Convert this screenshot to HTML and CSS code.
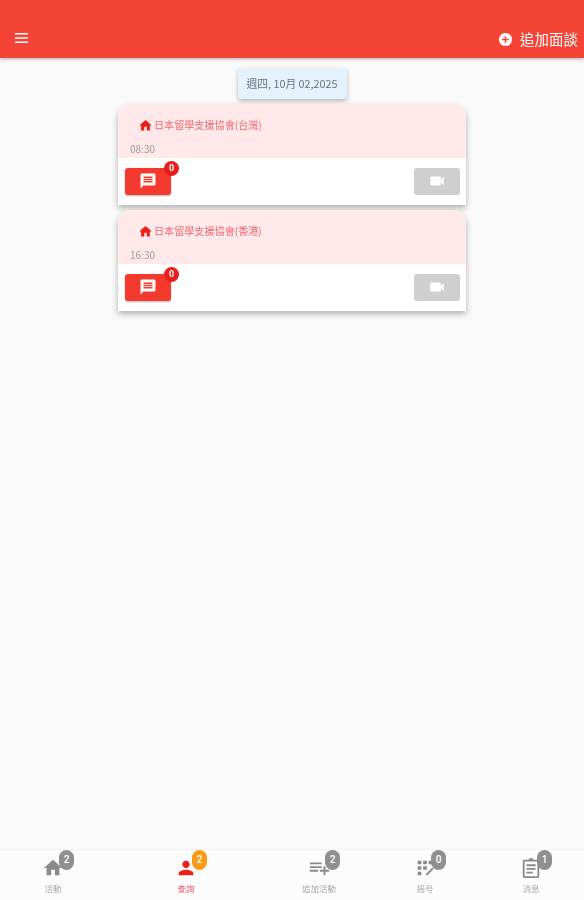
FILE: index.html
```html
<!DOCTYPE html>
<html lang="zh-Hant">
<head>
<meta charset="utf-8">
<title>面談</title>
<link rel="stylesheet" href="styles.css">
</head>
<body>
<div class="app">
  <header class="topbar">
    <svg class="menu-icon" viewBox="0 0 16 12"><path d="M1 1.500h14M1 6h14M1 10.500h14" stroke="#fff" stroke-width="1.500" fill="none"/></svg>
    <div class="add-action">
      <svg class="add-icon" viewBox="0 0 16 16"><circle cx="8" cy="8" r="7" fill="#fff"/><path d="M8 4.500v7M4.500 8h7" stroke="#f54336" stroke-width="1.600"/></svg>
      <span>追加面談</span>
    </div>
  </header>

  <main class="content">
    <div class="date-chip">週四, 10月 02,2025</div>

    <article class="card">
      <div class="card-head">
        <div class="place">
          <svg class="home-icon" viewBox="0 0 24 24"><path d="M10 20v-6h4v6h5v-8h3L12 3 2 12h3v8z"/></svg>
          <span>日本留學支援協會(台灣)</span>
        </div>
        <div class="time">08:30</div>
      </div>
      <div class="card-actions">
        <button class="chat-btn">
          <svg class="btn-icon" viewBox="0 0 24 24"><path d="M20 2H4c-1.100 0-2 .9-2 2v18l4-4h14c1.100 0 2-.9 2-2V4c0-1.100-.9-2-2-2zm-2 12H6v-2h12zm0-3H6V9h12zm0-3H6V6h12z"/></svg>
          <span class="chat-badge">0</span>
        </button>
        <button class="video-btn">
          <svg class="btn-icon" viewBox="0 0 24 24"><path d="M17 10.500V7c0-.55-.45-1-1-1H4c-.55 0-1 .45-1 1v10c0 .55.45 1 1 1h12c.55 0 1-.45 1-1v-3.500l4 4v-11z"/></svg>
        </button>
      </div>
    </article>

    <article class="card">
      <div class="card-head">
        <div class="place">
          <svg class="home-icon" viewBox="0 0 24 24"><path d="M10 20v-6h4v6h5v-8h3L12 3 2 12h3v8z"/></svg>
          <span>日本留學支援協會(香港)</span>
        </div>
        <div class="time">16:30</div>
      </div>
      <div class="card-actions">
        <button class="chat-btn">
          <svg class="btn-icon" viewBox="0 0 24 24"><path d="M20 2H4c-1.100 0-2 .9-2 2v18l4-4h14c1.100 0 2-.9 2-2V4c0-1.100-.9-2-2-2zm-2 12H6v-2h12zm0-3H6V9h12zm0-3H6V6h12z"/></svg>
          <span class="chat-badge">0</span>
        </button>
        <button class="video-btn">
          <svg class="btn-icon" viewBox="0 0 24 24"><path d="M17 10.500V7c0-.55-.45-1-1-1H4c-.55 0-1 .45-1 1v10c0 .55.45 1 1 1h12c.55 0 1-.45 1-1v-3.500l4 4v-11z"/></svg>
        </button>
      </div>
    </article>
  </main>

  <nav class="tabbar">
    <div class="tab">
      <div class="tab-icon">
        <svg viewBox="0 0 24 24"><path d="M10 20v-6h4v6h5v-8h3L12 3 2 12h3v8z"/></svg>
        <span class="tab-badge">2</span>
      </div>
      <span class="tab-label">活動</span>
    </div>
    <div class="tab tab-active">
      <div class="tab-icon">
        <svg viewBox="0 0 24 24"><path d="M12 12c2.200 0 4-1.800 4-4s-1.800-4-4-4-4 1.800-4 4 1.800 4 4 4zm0 2c-2.700 0-8 1.300-8 4v2h16v-2c0-2.700-5.300-4-8-4z"/></svg>
        <span class="tab-badge">2</span>
      </div>
      <span class="tab-label">查詢</span>
    </div>
    <div class="tab">
      <div class="tab-icon">
        <svg viewBox="0 0 24 24"><path d="M2 6h13v2H2zm0 4h13v2H2zm0 4h9v2H2zm15 0v-4h2v4h4v2h-4v4h-2v-4h-4v-2z"/></svg>
        <span class="tab-badge">2</span>
      </div>
      <span class="tab-label">追加活動</span>
    </div>
    <div class="tab">
      <div class="tab-icon">
        <svg viewBox="0 0 24 24"><path d="M4 4h4v4H4zm6 0h4v4h-4zm6 0h4v4h-4zM4 10h4v4H4zm6 0h4v4h-4zM4 16h4v4H4zm9 4v-1.500l7-7 1.500 1.500-7 7z"/></svg>
        <span class="tab-badge">0</span>
      </div>
      <span class="tab-label">摇号</span>
    </div>
    <div class="tab">
      <div class="tab-icon">
        <svg viewBox="0 0 24 24"><path d="M19 3h-4.200C14.400 1.800 13.300 1 12 1s-2.400.8-2.800 2H5c-1.100 0-2 .9-2 2v16c0 1.100.9 2 2 2h14c1.100 0 2-.9 2-2V5c0-1.100-.9-2-2-2zM19 21H5V5h14zM7 8h10v2H7zm0 4h10v2H7zm0 4h7v2H7z"/></svg>
        <span class="tab-badge">1</span>
      </div>
      <span class="tab-label">消息</span>
    </div>
  </nav>
</div>
</body>
</html>
```

FILE: styles.css
```css
* { box-sizing: border-box; }
html, body { margin: 0; height: 100%; }
body {
  font-family: "Noto Sans CJK TC", "Roboto", sans-serif;
  background: #fafafa;
  overflow: hidden;
}
.app {
  height: 900px;
  display: flex;
  flex-direction: column;
  filter: blur(.45px);
}
.topbar {
  height: 58px;
  flex: none;
  background: #f54336;
  box-shadow: 0 1px 3px rgba(0,0,0,.3);
  display: flex;
  align-items: flex-end;
  justify-content: space-between;
  padding: 0 6px 8px 14px;
  color: #fff;
  position: relative;
}
.menu-icon { width: 15px; height: 12px; margin-bottom: 6px; }
.add-action {
  display: flex;
  align-items: center;
  gap: 7px;
  font-size: 14.500px;
  line-height: 22px;
  color: #fff;
}
.add-icon { width: 15px; height: 15px; }
.content {
  flex: 1;
  display: flex;
  flex-direction: column;
  align-items: center;
  padding-top: 10px;
}
.date-chip {
  width: 109px;
  height: 31px;
  background: #e3f2fd;
  border-radius: 3px;
  box-shadow: 0 2px 4px rgba(0,0,0,.28);
  color: #6b7378;
  font-size: 10.800px;
  line-height: 31px;
  text-align: center;
  white-space: nowrap;
  margin-bottom: 5px;
}
.card {
  width: 348px;
  height: 101px;
  margin-bottom: 5px;
  background: #fff;
  border-radius: 12px 12px 0 0;
  box-shadow: 0 3px 6px rgba(0,0,0,.3);
  display: flex;
  flex-direction: column;
}
.card-head {
  height: 53.500px;
  flex: none;
  background: #ffe9ea;
  border-radius: 12px 12px 0 0;
  padding: 13px 12px 0;
}
.place {
  display: flex;
  align-items: center;
  gap: 1px;
  padding-left: 8px;
  height: 16px;
  color: #ef6a72;
  font-size: 10.100px;
  line-height: 16px;
  white-space: nowrap;
}
.home-icon { width: 15px; height: 15px; fill: #ea1f1a; flex: none; }
.time {
  margin-top: 9px;
  color: #9a9a9a;
  font-size: 10px;
  line-height: 14px;
}
.card-actions {
  flex: 1;
  display: flex;
  align-items: center;
  justify-content: space-between;
  padding: 0 6px 0 7px;
}
.chat-btn, .video-btn {
  width: 46px;
  height: 27px;
  border: 0;
  border-radius: 3px;
  padding: 0;
  display: flex;
  align-items: center;
  justify-content: center;
  position: relative;
}
.chat-btn { background: #f43a2e; box-shadow: 0 1px 2px rgba(0,0,0,.3); }
.video-btn { background: #cfcfcf; }
.btn-icon { width: 18px; height: 18px; fill: #fff; }
.chat-badge {
  position: absolute;
  top: -7px;
  right: -8px;
  width: 15px;
  height: 15px;
  border-radius: 50%;
  background: #ea1c1c;
  color: #fff;
  font: 700 9px/15px "Roboto", sans-serif;
  text-align: center;
}
.tabbar {
  height: 51px;
  flex: none;
  display: flex;
  border-top: 1px solid #f3f3f3;
  background: #fcfcfc;
}
.tab {
  flex: 0 0 106px;
  display: flex;
  flex-direction: column;
  align-items: center;
  padding-top: 7px;
  color: #a8a8a8;
}
.tab-active { flex-basis: 160px; color: #ee5a62; }
.tab-icon {
  width: 22px;
  height: 22px;
  position: relative;
}
.tab-icon svg { width: 22px; height: 22px; fill: #8a8a8a; display: block; }
.tab-active .tab-icon svg { fill: #e8201a; }
.tab-badge {
  position: absolute;
  left: 17px;
  top: -7px;
  width: 15px;
  height: 20px;
  border-radius: 7.500px;
  background: #8f8f8f;
  color: #fff;
  font: 500 10px/20px "Roboto", sans-serif;
  text-align: center;
}
.tab-active .tab-badge { background: #fb9a16; }
.tab-label {
  font-size: 8.500px;
  line-height: 12px;
  margin-top: 3px;
}
```
